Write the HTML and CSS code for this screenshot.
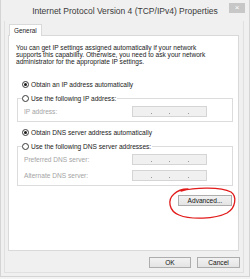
FILE: index.html
```html
<!DOCTYPE html>
<html lang="en">
<head>
    <meta charset="UTF-8">
    <title>Internet Protocol Version 4 (TCP/IPv4) Properties</title>
    <link rel="stylesheet" href="styles.css">
</head>
<body>
    <div class="window">
        <div class="titlebar">
            <span></span>
            <span class="title">Internet Protocol Version 4 (TCP/IPv4) Properties</span>
            <span class="close">&#215;</span>
        </div>

        <div class="content">
            <div class="tabs">
                <span class="tab">General</span>
            </div>
            <div class="panel">
                <p class="intro">You can get IP settings assigned automatically if your network<br>supports this capability. Otherwise, you need to ask your network<br>administrator for the appropriate IP settings.</p>

                <div class="radio-row"><span class="radio checked"></span>Obtain an IP address automatically</div>
                <fieldset class="group">
                    <legend><span class="radio"></span>Use the following IP address:</legend>
                    <div class="field-row">
                        <span class="label">IP address:</span>
                        <span class="ip"><i></i><i></i><i></i></span>
                    </div>
                </fieldset>

                <div class="radio-row dns"><span class="radio checked"></span>Obtain DNS server address automatically</div>
                <fieldset class="group">
                    <legend><span class="radio"></span>Use the following DNS server addresses:</legend>
                    <div class="field-row">
                        <span class="label">Preferred DNS server:</span>
                        <span class="ip"><i></i><i></i><i></i></span>
                    </div>
                    <div class="field-row">
                        <span class="label">Alternate DNS server:</span>
                        <span class="ip"><i></i><i></i><i></i></span>
                    </div>
                </fieldset>

                <div class="adv-row">
                    <button class="btn adv">Advanced...</button>
                </div>
            </div>

            <div class="footer">
                <button class="btn">OK</button>
                <button class="btn">Cancel</button>
            </div>
        </div>

        <!-- red hand-drawn mark round the Advanced button -->
        <svg class="annotation" width="250" height="279" viewBox="0 0 250 279">
            <path d="M180 191 C195 187, 220 187, 230 192 C236 196, 235 208, 226 213 C214 219, 190 220, 178 215 C168 211, 166 200, 173 194 C176 191, 181 189, 187 189" fill="none" stroke="#e21b1b" stroke-width="1.3" stroke-linecap="round"/>
        </svg>
    </div>
</body>
</html>
```

FILE: styles.css
```css
/* Dialog window */
:root {
    --bg-color: #f0f0f0;
    --frame-line: #d4d4d4;
    --panel-border: #d9d9d9;
    --group-border: #dcdcdc;
    --text-color: #1a1a1a;
    --disabled-color: #a3a3a3;
}
body {
    margin: 0;
    background: #f3f3f3;
    font-family: 'Liberation Sans', Arial, sans-serif;
    font-size: 6.6px;
    color: var(--text-color);
}
.window {
    position: relative;
    width: 250px;
    height: 277px;
    box-sizing: border-box;
    border: 1px solid var(--frame-line);
    border-top: 0;
    background: var(--bg-color);
    display: flex;
    flex-direction: column;
}

/* Title bar */
.titlebar {
    height: 21px;
    display: grid;
    grid-template-columns: 1fr auto 1fr;
    align-items: center;
}
.title {
    font-size: 8.5px;
    color: #3a3a3a;
    padding-top: 1px;
}
.close {
    justify-self: end;
    align-self: start;
    margin: 3px 4px 0 0;
    width: 16px;
    height: 10px;
    background: #c7c7c7;
    color: #fff;
    font-size: 8px;
    line-height: 10px;
    text-align: center;
}

/* Content frame */
.content {
    flex: 1;
    margin: 0 5px 3px 3px;
    border: 1px solid #e0e0e0;
    border-top: 0;
    padding: 3px 3px 0 3px;
}
.tabs {
    display: flex;
    padding-left: 1px;
}
.tab {
    position: relative;
    z-index: 1;
    height: 11px;
    padding: 0 4px;
    margin-bottom: -1px;
    border: 1px solid var(--panel-border);
    border-bottom: 0;
    background: #fff;
    line-height: 11px;
    font-size: 6.4px;
}
.panel {
    height: 216px;
    box-sizing: border-box;
    margin-right: 1px;
    background: #fff;
    border: 1px solid var(--panel-border);
    padding: 8px 5px 0 7px;
}
.intro {
    margin: 0;
    line-height: 7px;
}

/* Radios and groups */
.radio-row {
    display: flex;
    align-items: center;
    height: 10px;
    margin-top: 14px;
    padding-left: 6px;
}
.radio-row.dns { margin-top: 5px; }
.radio {
    width: 5px;
    height: 5px;
    border: 1px solid #3a3a3a;
    border-radius: 50%;
    background: #fff;
    margin-right: 2px;
    position: relative;
}
.radio.checked::after {
    content: '';
    position: absolute;
    left: 1px;
    top: 1px;
    width: 3px;
    height: 3px;
    border-radius: 50%;
    background: #1a1a1a;
}
.group {
    margin: 4px 0 0 1px;
    border: 1px solid var(--group-border);
    padding: 3px 0 4px 4px;
}
.group legend {
    display: flex;
    align-items: center;
    height: 10px;
    padding: 0 1px 0 0;
}
.field-row {
    display: grid;
    grid-template-columns: 108px 75px;
    align-items: center;
    height: 11px;
    padding-left: 2px;
}
.field-row + .field-row { margin-top: 5px; }
.label { color: var(--disabled-color); }
.ip {
    height: 11px;
    box-sizing: border-box;
    border: 1px solid #d5d5d5;
    background: #f0f0f0;
    display: flex;
    justify-content: space-evenly;
    align-items: center;
    padding-top: 3px;
}
.ip i {
    width: 1px;
    height: 1px;
    background: #9a9a9a;
}

/* Buttons */
.btn {
    font-family: inherit;
    font-size: 6.6px;
    color: #111;
    height: 11px;
    padding: 0;
    border: 1px solid #adadad;
    background: linear-gradient(#f2f2f2, #e4e4e4);
}
.adv-row {
    display: flex;
    justify-content: flex-end;
    margin-top: 9px;
    padding-right: 1px;
}
.adv { width: 54px; }
.footer {
    display: flex;
    justify-content: flex-end;
    gap: 6px;
    margin-top: 6px;
}
.footer .btn { width: 42px; }
.footer .btn + .btn { width: 43px; }

/* Overlay mark */
.annotation {
    position: absolute;
    left: 0;
    top: 0;
    pointer-events: none;
}
```
